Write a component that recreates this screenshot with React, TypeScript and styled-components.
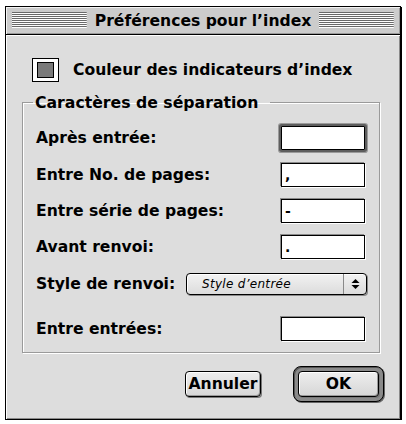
import React from "react";
import styled, { createGlobalStyle } from "styled-components";

const GlobalStyle = createGlobalStyle`
  html, body { margin: 0; padding: 0; background: #ffffff; }
  body { font-family: "DejaVu Sans", "Liberation Sans", sans-serif; color: #000; }
`;

const Window = styled.div`
  margin: 6px 0 0 5px;
  width: 394px;
  height: 412px;
  border: 1px solid #000;
  box-shadow: 1px 1px 0 #000;
  background: #dddddd;
  display: flex;
  flex-direction: column;
`;

const TitleBar = styled.div`
  height: 27px;
  flex: none;
  border-bottom: 1px solid #000;
  background-color: #cccccc;
  box-shadow: inset 1px 1px 0 #f4f4f4, inset -1px -1px 0 #999;
  display: flex;
  align-items: center;
  padding: 0 6px;
  gap: 5px;
`;

const Stripes = styled.svg`
  flex: 1 1 0%;
  min-width: 40px;
  height: 17px;
  display: block;
`;

const Title = styled.div`
  flex: none;
  font-weight: bold;
  font-size: 15.6px;
  padding: 0 3px;
  white-space: nowrap;
`;

const Content = styled.div`
  flex: 1;
  display: flex;
  flex-direction: column;
  box-shadow: inset 1px 1px 0 #ffffff, inset -1px -1px 0 #8a8a8a;
`;

const ColorRow = styled.div`
  display: flex;
  align-items: center;
  gap: 14px;
  margin: 23px 0 0 26px;
  height: 24px;
`;

const Swatch = styled.div`
  width: 27px;
  height: 24px;
  box-sizing: border-box;
  border: 1px solid #000;
  background: #fff;
  display: flex;
  align-items: center;
  justify-content: center;
`;

const SwatchFill = styled.div`
  width: 15px;
  height: 14px;
  border: 1px solid #000;
  background: #7a7a7a;
`;

const Label = styled.span`
  font-weight: bold;
  font-size: 15.6px;
  white-space: nowrap;
`;

const Group = styled.fieldset`
  margin: 11px 0 0 16px;
  width: 358px;
  box-sizing: border-box;
  height: 260px;
  border: 1px solid #9a9a9a;
  box-shadow: 1px 1px 0 #ffffff, inset 1px 1px 0 #ffffff;
  padding: 13px 14px 0 13px;
  display: flex;
  flex-direction: column;
`;

const Legend = styled.legend`
  font-weight: bold;
  font-size: 15.7px;
  margin-left: -3px;
  padding: 0 12px 0 2px;
  line-height: 19px;
`;

const Row = styled.div<{ $space: number }>`
  display: flex;
  align-items: center;
  justify-content: space-between;
  height: 25px;
  margin-top: ${(p) => p.$space}px;
`;

const Field = styled.div<{ $focused?: boolean }>`
  width: 84px;
  height: 24px;
  box-sizing: border-box;
  background: #fff;
  border: 1px solid #000;
  box-shadow: ${(p) =>
    p.$focused ? "0 0 0 2px #5e5e5e, 0 0 0 3px #9a9a9a" : "-1px -1px 0 #8a8a8a, 1px 1px 0 #ffffff"};
  border-radius: ${(p) => (p.$focused ? "1px" : "0")};
  font-weight: bold;
  font-size: 14px;
  line-height: 22px;
  padding-left: 3px;
`;

const Popup = styled.div`
  width: 181px;
  height: 22px;
  box-sizing: border-box;
  margin-right: -2px;
  border: 1px solid #000;
  border-radius: 4px;
  background: linear-gradient(to bottom, #f2f2f2, #dcdcdc);
  box-shadow: inset 1px 1px 0 #fff, 1px 1px 0 #8a8a8a;
  display: flex;
  align-items: center;
`;

const PopupText = styled.span`
  flex: 1;
  font-style: italic;
  font-size: 12px;
  padding-left: 15px;
  letter-spacing: 0.3px;
`;

const PopupArrows = styled.div`
  width: 22px;
  height: 100%;
  border-left: 1px solid #8a8a8a;
  display: flex;
  align-items: center;
  justify-content: center;
`;

const ButtonBar = styled.div`
  display: flex;
  justify-content: flex-end;
  align-items: center;
  gap: 32px;
  margin-top: 13px;
  padding-right: 16px;
`;

const Button = styled.button`
  font-family: "DejaVu Sans", "Liberation Sans", sans-serif;
  font-weight: bold;
  font-size: 15.6px;
  color: #000;
  height: 26px;
  width: 76px;
  padding: 0;
  border: 1px solid #000;
  border-radius: 4px;
  background: linear-gradient(to bottom, #eeeeee, #d6d6d6);
  box-shadow: inset 1px 1px 0 #ffffff, inset -1px -1px 0 #9a9a9a, 1px 1px 0 #777;
`;

const DefaultRing = styled.div`
  width: 91px;
  height: 36px;
  box-sizing: border-box;
  border: 1px solid #000;
  border-radius: 8px;
  background: #8a8a8a;
  box-shadow: inset 1px 1px 0 #555, 1px 1px 0 #666;
  display: flex;
  align-items: center;
  justify-content: center;
  & > button {
    width: 81px;
    height: 26px;
  }
`;

const stripeRows = [0, 1, 2, 3, 4, 5, 6, 7];

function TitleStripes() {
  return (
    <Stripes preserveAspectRatio="none" viewBox="0 0 100 17">
      {stripeRows.map((k) => (
        <g key={k}>
          <rect x="0" y={k * 2} width="100" height="1" fill="#6a6a6a" />
          <rect x="0" y={k * 2 + 1} width="100" height="1" fill="#ffffff" />
        </g>
      ))}
    </Stripes>
  );
}

export default function App() {
  return (
    <>
      <GlobalStyle />
      <Window>
        <TitleBar>
          <TitleStripes />
          <Title>Préférences pour l’index</Title>
          <TitleStripes />
        </TitleBar>
        <Content>
          <ColorRow>
            <Swatch>
              <SwatchFill />
            </Swatch>
            <Label>Couleur des indicateurs d’index</Label>
          </ColorRow>
          <Group>
            <Legend>Caractères de séparation</Legend>
            <Row $space={0}>
              <Label>Après entrée:</Label>
              <Field $focused />
            </Row>
            <Row $space={12}>
              <Label>Entre No. de pages:</Label>
              <Field>,</Field>
            </Row>
            <Row $space={11}>
              <Label>Entre série de pages:</Label>
              <Field>-</Field>
            </Row>
            <Row $space={11}>
              <Label>Avant renvoi:</Label>
              <Field>.</Field>
            </Row>
            <Row $space={12}>
              <Label>Style de renvoi:</Label>
              <Popup>
                <PopupText>Style d’entrée</PopupText>
                <PopupArrows>
                  <svg width="9" height="12" viewBox="0 0 9 12">
                    <path d="M0.5 5 L4.5 1 L8.5 5 Z" fill="#000" />
                    <path d="M0.5 7 L4.5 11 L8.5 7 Z" fill="#000" />
                  </svg>
                </PopupArrows>
              </Popup>
            </Row>
            <Row $space={20}>
              <Label>Entre entrées:</Label>
              <Field />
            </Row>
          </Group>
          <ButtonBar>
            <Button>Annuler</Button>
            <DefaultRing>
              <Button>OK</Button>
            </DefaultRing>
          </ButtonBar>
        </Content>
      </Window>
    </>
  );
}
